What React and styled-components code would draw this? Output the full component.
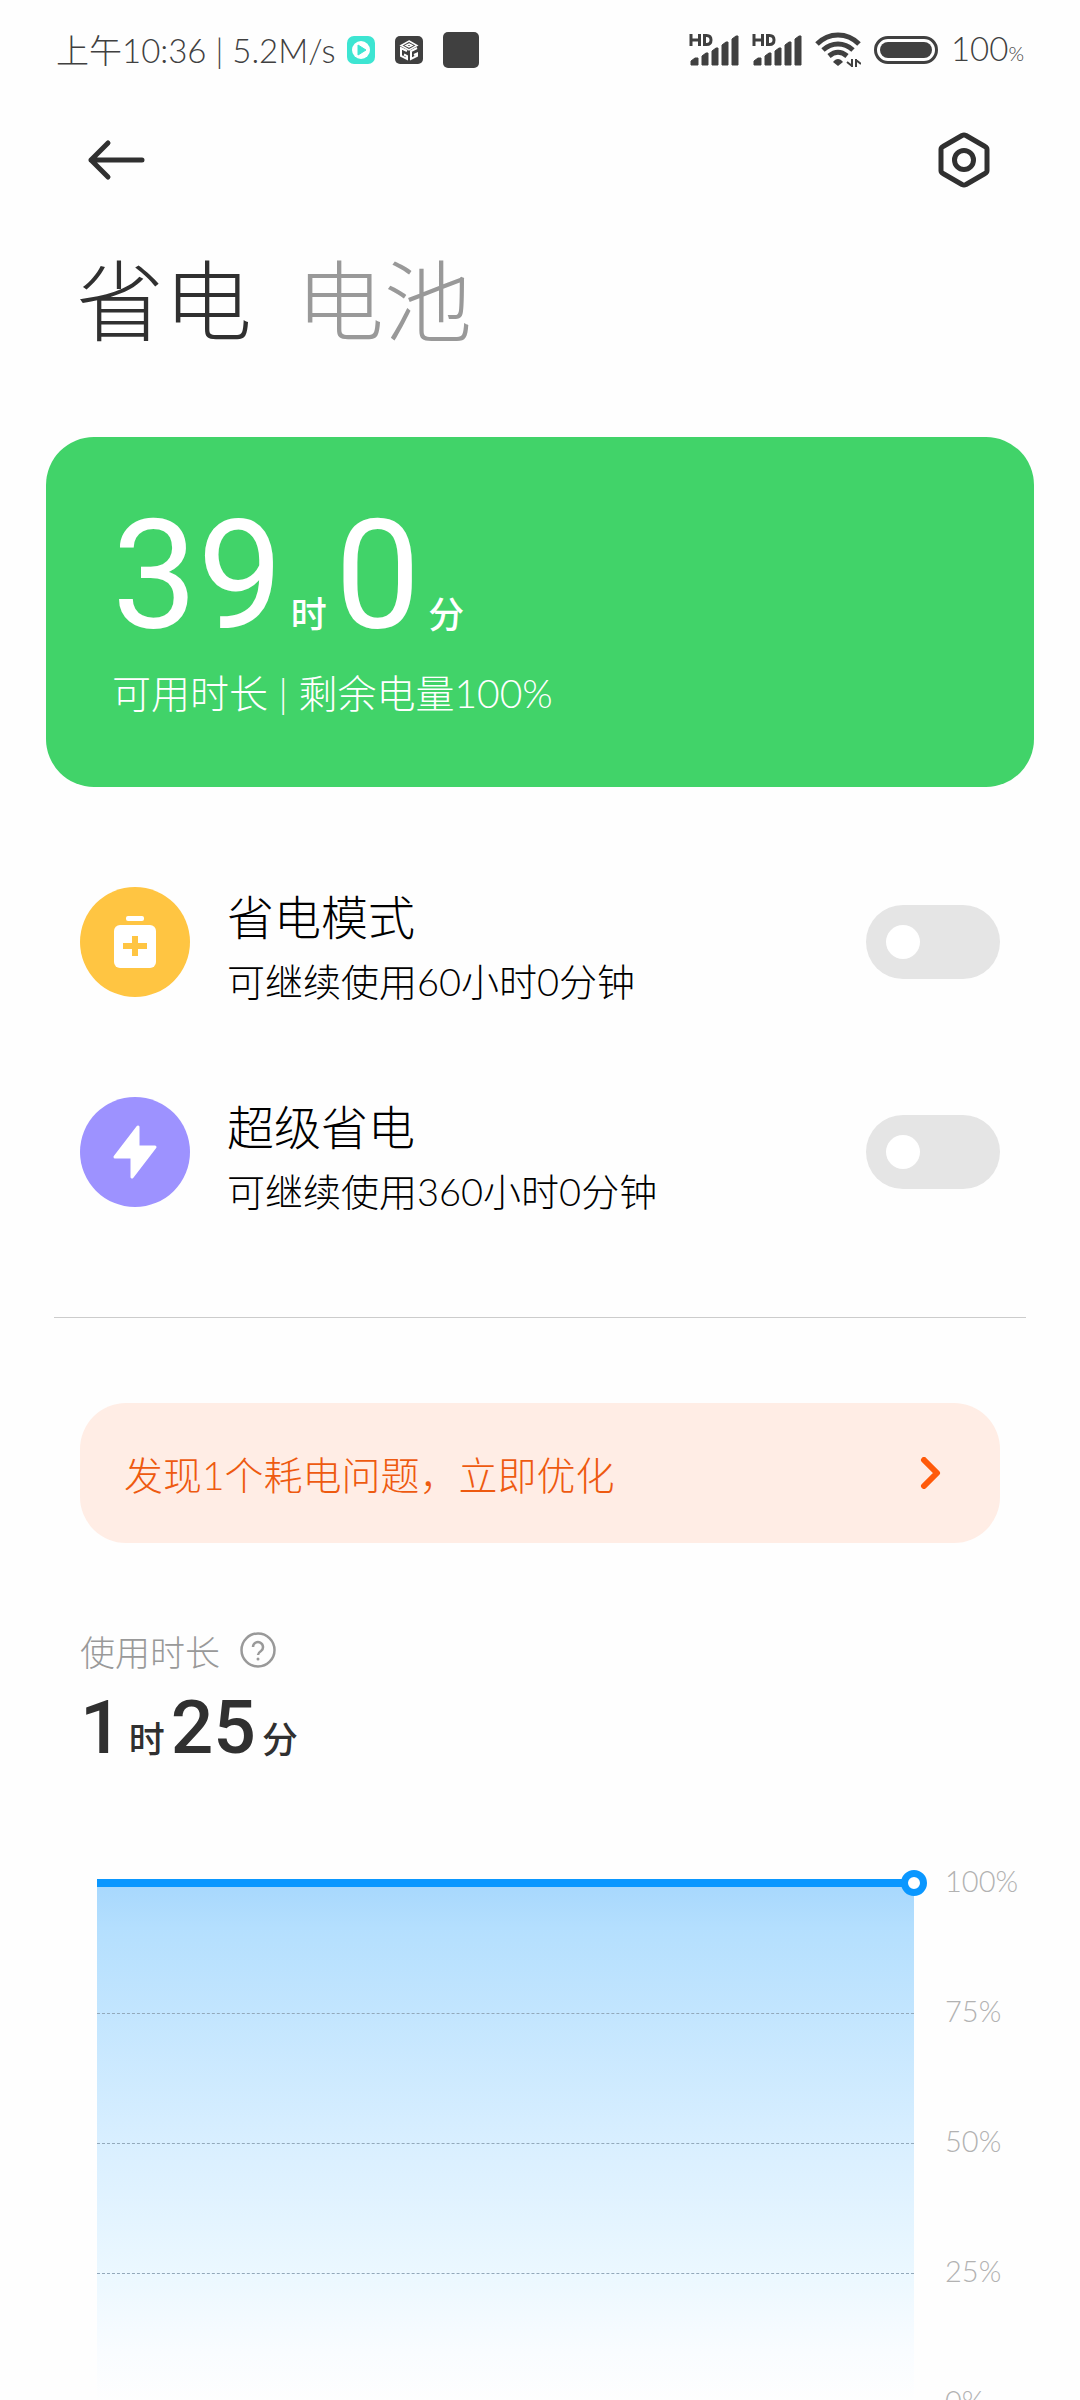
import React, { useState } from "react";
import styled, { createGlobalStyle } from "styled-components";

const GlobalStyle = createGlobalStyle`
    * {
        box-sizing: border-box;
    }
    body {
        margin: 0;
        background: #fefefe;
        color: #303030;
        font-family: Lato, "Noto Sans CJK SC", sans-serif;
        font-weight: 300;
        overflow-x: hidden;
    }
    p {
        margin: 0;
    }
    button {
        padding: 0;
        border: none;
        background: none;
        color: inherit;
        font: inherit;
        cursor: pointer;
    }
    svg {
        display: block;
        flex: none;
    }
`

const Page = styled.div`
    height: 100vh;
    overflow: hidden;
`

const StatusBar = styled.header`
    display: flex;
    align-items: center;
    justify-content: space-between;
    height: 100px;
    padding: 0 56px;
    color: #404040;
    font-size: 33px;
    line-height: 40px;
`
const StatusGroup = styled.div`
    display: flex;
    align-items: center;
    gap: ${(props) => props.$gap}px;
`
const StatusText = styled.span`
    white-space: nowrap;
`
const SmallPercent = styled.span`
    font-size: 20px;
`

const NavBar = styled.nav`
    display: flex;
    align-items: center;
    justify-content: space-between;
    height: 120px;
    padding: 0 84px;
`

const TabList = styled.div`
    display: flex;
    gap: 44px;
    padding: 20px 76px 0;
`
const Tab = styled.button`
    && {
        font-size: 88px;
        line-height: 120px;
        color: ${(props) => (props.$active ? "#303030" : "#999999")};
    }
`

const SummaryCard = styled.section`
    margin: 77px 46px 0;
    padding: 64px 66px 62px;
    border-radius: 48px;
    background: #41d369;
    color: #fff;
`
const BigDuration = styled.p`
    display: flex;
    align-items: baseline;
    height: 150px;
    font-family: Roboto, "Noto Sans CJK SC", sans-serif;
    font-weight: 400;
    font-size: 152px;
    line-height: 150px;
`
const SmallDuration = styled(BigDuration)`
    height: 100px;
    font-weight: 500;
    font-size: 75px;
    line-height: 100px;
`
const Unit = styled.span`
    margin: 0 ${(props) => props.$gap}px;
    font-size: 36px;
    font-weight: 500;
    line-height: 36px;
`
const SummaryText = styled.p`
    height: 64px;
    margin-top: 10px;
    font-size: 39px;
    line-height: 64px;
`

const ModeList = styled.section`
    display: grid;
    gap: 80px;
    margin: 0 54px;
    padding: 90px 26px 100px;
    border-bottom: 1px solid #cccccc;
`
const ModeRow = styled.div`
    display: flex;
    align-items: center;
    height: 130px;
`
const ModeBadge = styled.div`
    display: flex;
    align-items: center;
    justify-content: center;
    flex: none;
    width: 110px;
    height: 110px;
    border-radius: 50%;
    background: ${(props) => props.$color};
`
const ModeLabel = styled.label`
    flex: 1;
    margin-left: 37px;
    padding-top: 14px;
    color: #000;
`
const ModeTitle = styled.span`
    display: block;
    font-size: 47px;
    line-height: 64px;
`
const ModeHint = styled.span`
    display: block;
    font-size: 38px;
    line-height: 64px;
`
const Switch = styled.input`
    appearance: none;
    flex: none;
    width: 134px;
    height: 74px;
    margin: 0;
    padding: 20px;
    border-radius: 37px;
    background: #e5e5e5;
    cursor: pointer;

    &::before {
        content: "";
        display: block;
        width: 34px;
        height: 34px;
        border-radius: 50%;
        background: #fff;
    }
    &:checked {
        background: #41d369;
    }
    &:checked::before {
        margin-left: auto;
    }
`

const IssueButton = styled.button`
    && {
        display: flex;
        align-items: center;
        justify-content: space-between;
        width: calc(100% - 160px);
        height: 140px;
        margin: 85px 80px 0;
        padding: 0 58px 0 44px;
        border-radius: 46px;
        background: #ffede5;
        color: #ee5a10;
        font-size: 39px;
    }
`

const Usage = styled.section`
    padding: 80px 80px 0;
`
const UsageHead = styled.div`
    display: flex;
    align-items: center;
    gap: 20px;
    height: 54px;
    color: #999999;
    font-size: 35px;
`

const Chart = styled.section`
    display: grid;
    grid-template-columns: 1fr 134px;
    margin: 102px 0 0 97px;
    padding-right: 32px;
`
const Plot = styled.div`
    position: relative;
    height: 524px;
    border-top: 8px solid #0a97ff;
    background: linear-gradient(#a8d8fd, #b4dffe 8%, #d9efff 50%, #ecf8ff 76%, #f9fcff 90%, #fefefe);
`
const GridLine = styled.div`
    height: 130px;
    border-bottom: 1px dashed #93a9bb;

    &:first-child {
        height: 127px;
    }
    &:nth-child(4) {
        border: none;
    }
`
const Marker = styled.span`
    position: absolute;
    top: -17px;
    right: -13px;
    width: 26px;
    height: 26px;
    border: 7px solid #0a97ff;
    border-radius: 50%;
    background: #fff;
`
const Axis = styled.div`
    margin: -18px 0 0 31px;
    color: #b2b2b2;
    font-size: 29px;
    line-height: 40px;
`
const AxisLabel = styled.div`
    height: 130px;
`

function SignalIcon() {
    return (
        <svg width="50" height="34" viewBox="0 0 50 34" fill="#404040">
            <path d="M2 1v12M10.500 1v12M2 7h8.500" stroke="#404040" strokeWidth="3" fill="none" />
            <path d="M15.500 2.500h2q4.500 0 4.500 4.500t-4.500 4.500h-2z" stroke="#404040" strokeWidth="3" fill="none" />
            <path d="M2 32v-4l4-3h3v7zM13 32V23l4-3h2v12zM23 32V18l4-3h2v17zM33 32V12l4-3h2v23zM43 32V6l4-3h2v29z" stroke="#404040" strokeLinejoin="round" />
        </svg>
    )
}

function WifiIcon() {
    return (
        <svg width="46" height="36" viewBox="0 0 46 36" fill="none" stroke="#404040" strokeWidth="5">
            <path d="M2 12C14 0 32 0 44 12M8 18c9-8 21-8 30 0M14 24c6-5 12-5 18 0" />
            <path d="M18 30c3-4 7-4 10 0l-5 4z" fill="#404040" stroke="none" />
            <path d="M37 27v8M41 27v8M37 34l-5-4M41 28l5 4" strokeWidth="2" />
        </svg>
    )
}

function BatteryIcon() {
    return (
        <svg width="64" height="28" viewBox="0 0 64 28">
            <rect x="1.500" y="1.500" width="61" height="25" rx="12.500" fill="none" stroke="#404040" strokeWidth="3" />
            <rect x="6" y="6" width="52" height="16" rx="8" fill="#404040" />
        </svg>
    )
}

function PlayAppIcon() {
    return (
        <svg width="28" height="28" viewBox="0 0 28 28">
            <rect width="28" height="28" rx="7" fill="#3de5d2" />
            <circle cx="14" cy="14" r="9" fill="#fff" />
            <path d="M11 9l8 5-8 5z" fill="#3de5d2" stroke="#3de5d2" strokeLinejoin="round" />
        </svg>
    )
}

function CubeAppIcon() {
    return (
        <svg width="28" height="28" viewBox="0 0 28 28" fill="none" stroke="#fff" strokeWidth="2">
            <rect width="28" height="28" rx="5" fill="#404040" stroke="none" />
            <path d="M14 5l8 4.500-8 4.500-8-4.500zM14 8l3 1.500-3 1.500-3-1.500z" strokeWidth="1.500" />
            <path d="M12 15l-6-3v8l6 3v-3l-3-1.500M22 12l-6 3v8l6-3v-2.500l-3 1.500" />
        </svg>
    )
}

function BlankAppIcon() {
    return (
        <svg width="36" height="36">
            <rect width="36" height="36" rx="5" fill="#404040" />
        </svg>
    )
}

function BackIcon() {
    return (
        <svg width="66" height="44" viewBox="0 0 66 44" fill="none" stroke="#303030" strokeWidth="5" strokeLinecap="round" strokeLinejoin="round">
            <path d="M58 22H7M24 5L7 22l17 17" />
        </svg>
    )
}

function SettingsIcon() {
    return (
        <svg width="66" height="60" viewBox="2 0 66 60" fill="none" stroke="#303030" strokeWidth="5" strokeLinejoin="round">
            <path d="M38 5.500L57 16.500q2 1 2 3v21q0 2-2 3L38 54.500q-2 1-4 0L15 43.500q-2-1-2-3v-21q0-2 2-3L34 5.500q2-1 4 0z" />
            <circle cx="36" cy="30" r="9.500" />
        </svg>
    )
}

function SaverIcon() {
    return (
        <svg width="42" height="52" viewBox="0 0 42 52">
            <rect x="12" width="18" height="5" rx="2" fill="#fff" />
            <rect y="9" width="42" height="43" rx="6" fill="#fff" />
            <path d="M21 20v20M9 30h24" stroke="#ffc542" strokeWidth="6" />
        </svg>
    )
}

function BoltIcon() {
    return (
        <svg width="44" height="54" viewBox="0 0 44 54">
            <path d="M25 2v20h17L19 52V32H2z" fill="#fff" stroke="#fff" strokeWidth="3" strokeLinejoin="round" />
        </svg>
    )
}

function HelpIcon() {
    return (
        <svg width="36" height="36" viewBox="0 0 36 36" fill="none" stroke="#999" strokeWidth="2.500">
            <circle cx="18" cy="18" r="16.500" />
            <path d="M13 15a5 5 0 1 1 8 4q-3 2-3 4" />
            <circle cx="18" cy="27" r="1.500" fill="#999" stroke="none" />
        </svg>
    )
}

function ChevronIcon() {
    return (
        <svg width="22" height="32" viewBox="0 0 22 32" fill="none" stroke="#ff5a0a" strokeWidth="6" strokeLinecap="round" strokeLinejoin="round">
            <path d="M4 3l13 13L4 29" />
        </svg>
    )
}

const modes = [
    { id: "saver", title: "省电模式", hint: "可继续使用60小时0分钟", color: "#ffc542", Icon: SaverIcon },
    { id: "ultra", title: "超级省电", hint: "可继续使用360小时0分钟", color: "#9d92ff", Icon: BoltIcon },
]

const levels = ["100%", "75%", "50%", "25%", "0%"]

export default function App() {
    const [tab, setTab] = useState("省电")

    return (
        <Page>
            <GlobalStyle />
            <StatusBar>
                <StatusGroup $gap={12}>
                    <StatusText>上午10:36 | 5.2M/s</StatusText>
                    <StatusGroup $gap={20}>
                        <PlayAppIcon />
                        <CubeAppIcon />
                        <BlankAppIcon />
                    </StatusGroup>
                </StatusGroup>
                <StatusGroup $gap={13}>
                    <SignalIcon />
                    <SignalIcon />
                    <WifiIcon />
                    <BatteryIcon />
                    <StatusText>100<SmallPercent>%</SmallPercent></StatusText>
                </StatusGroup>
            </StatusBar>
            <NavBar>
                <button aria-label="返回"><BackIcon /></button>
                <button aria-label="设置"><SettingsIcon /></button>
            </NavBar>
            <TabList>
                {["省电", "电池"].map((name) => (
                    <Tab key={name} $active={tab === name} onClick={() => setTab(name)}>{name}</Tab>
                ))}
            </TabList>

            <SummaryCard>
                <BigDuration>
                    39<Unit $gap={8}>时</Unit>0<Unit $gap={8}>分</Unit>
                </BigDuration>
                <SummaryText>可用时长 | 剩余电量100%</SummaryText>
            </SummaryCard>

            <ModeList>
                {modes.map(({ id, title, hint, color, Icon }) => (
                    <ModeRow key={id}>
                        <ModeBadge $color={color}><Icon /></ModeBadge>
                        <ModeLabel htmlFor={id}>
                            <ModeTitle>{title}</ModeTitle>
                            <ModeHint>{hint}</ModeHint>
                        </ModeLabel>
                        <Switch type="checkbox" role="switch" id={id} />
                    </ModeRow>
                ))}
            </ModeList>

            <IssueButton>
                发现1个耗电问题，立即优化
                <ChevronIcon />
            </IssueButton>

            <Usage>
                <UsageHead>
                    使用时长
                    <button aria-label="帮助"><HelpIcon /></button>
                </UsageHead>
                <SmallDuration>
                    1<Unit $gap={6}>时</Unit>25<Unit $gap={6}>分</Unit>
                </SmallDuration>
            </Usage>

            <Chart>
                <Plot>
                    <GridLine />
                    <GridLine />
                    <GridLine />
                    <GridLine />
                    <Marker />
                </Plot>
                <Axis>
                    {levels.map((level) => (
                        <AxisLabel key={level}>{level}</AxisLabel>
                    ))}
                </Axis>
            </Chart>
        </Page>
    )
}
